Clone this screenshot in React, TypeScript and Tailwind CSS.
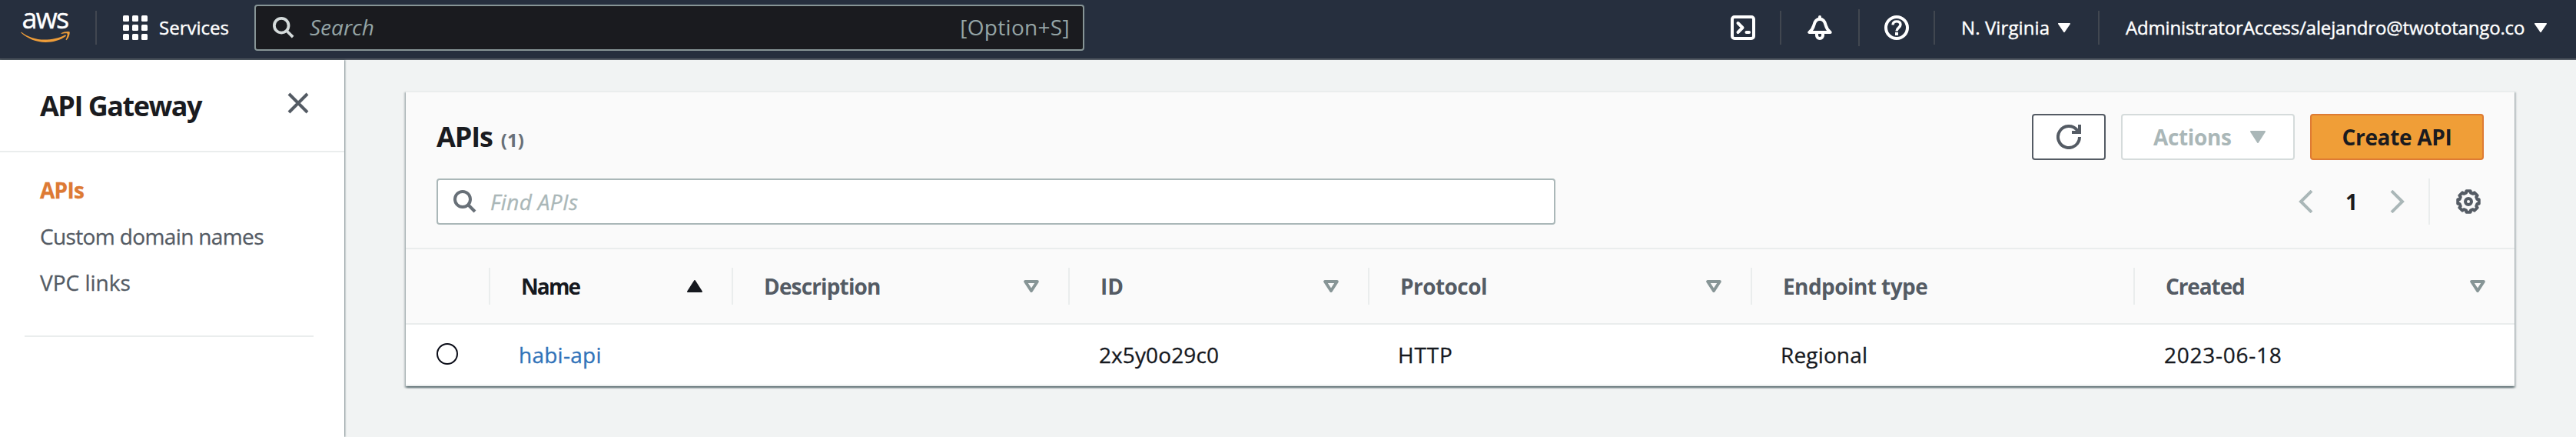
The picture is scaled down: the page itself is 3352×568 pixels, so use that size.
import type { ReactNode } from "react";

function AwsLogo() {
  return (
    <svg className="h-[44px] w-[64px] shrink-0 overflow-visible" viewBox="28 14 64 44">
      <text x="28.5" y="36.5" fontSize="36" letterSpacing="-1.7" fill="#fff" stroke="#fff" strokeWidth="0.4" fontFamily="'Open Sans', sans-serif">aws</text>
      <path d="M28 41.8C36 48 46 51.6 58 51.6 67 51.6 77 49.6 84.5 45.6 85.8 45 86.6 46.4 85.4 47.3 78 52.6 68.500 55 59.500 55 47 55 36 50.200 27.600 42.800 27.100 42.200 27.400 41.500 28 41.800Z" fill="#ee9d39" />
      <path d="M79.500 43.200C82.500 41 90 40.300 90.600 41.500 91.200 42.800 90 49 86.600 52 86 52.400 85.400 52 85.700 51.300 86.800 49 88.300 44.800 87.600 43.700 86.900 42.700 82.600 43.400 80 43.800 79.200 43.900 79 43.500 79.500 43.200Z" fill="#ee9d39" />
    </svg>
  );
}

function GridIcon() {
  return (
    <div className="grid size-8 shrink-0 grid-cols-3 gap-1">
      {Array.from({ length: 9 }, (_, i) => (
        <span key={i} className="size-2 rounded-[1.5px] bg-white" />
      ))}
    </div>
  );
}

function SearchIcon({ className }: { className: string }) {
  return (
    <svg className={className} viewBox="0 0 30 30" fill="none" stroke="currentColor" strokeWidth="4">
      <circle cx="12" cy="12" r="10" />
      <path d="M19 19l9 9" />
    </svg>
  );
}

function ShellIcon() {
  return (
    <svg className="size-8 shrink-0" viewBox="0 0 32 32" fill="none" stroke="#fff" strokeWidth="4">
      <rect x="2" y="2" width="28" height="28" rx="3" />
      <path d="M9.500 10l6 6-6 6" strokeLinecap="round" strokeLinejoin="round" />
      <path d="M20.500 22h3.500" strokeLinecap="round" />
    </svg>
  );
}

function BellIcon() {
  return (
    <svg className="size-8 shrink-0" viewBox="0 0 32 32" fill="none" stroke="#fff" strokeWidth="4" strokeLinejoin="round">
      <path d="M16 2v3" strokeLinecap="round" />
      <path d="M2.300 22h27.400c-3.200-2.600-4.900-5-5.900-9C22.600 7.500 20.200 4.800 16 4.800S9.400 7.500 8.200 13c-1 4-2.700 6.400-5.900 9z" />
      <path d="M12 23v3a4 4 0 0 0 8 0v-3" />
    </svg>
  );
}

function HelpIcon() {
  return (
    <svg className="size-8 shrink-0" viewBox="0 0 32 32" fill="none" stroke="#fff">
      <circle cx="16" cy="16" r="14" strokeWidth="4" />
      <path d="M11 12.300C11.200 9.400 13 7.900 16 7.900c3 0 5 1.600 5 4.200 0 3.900-5 3.600-5 8.400" strokeWidth="3.400" />
      <path d="M16 22v4" strokeWidth="4" />
    </svg>
  );
}

function Caret({ className }: { className: string }) {
  return (
    <svg className={className} viewBox="0 0 20 16" preserveAspectRatio="none" fill="currentColor" stroke="currentColor" strokeWidth="2" strokeLinejoin="round">
      <path d="M1 1h18L10 15z" />
    </svg>
  );
}

function SortIcon() {
  return (
    <svg className="h-4 w-5 shrink-0 text-[#879596]" viewBox="0 0 20 16" fill="none" stroke="currentColor" strokeWidth="4" strokeLinejoin="round">
      <path d="M2.200 2h15.600L10 14z" />
    </svg>
  );
}

function CloseIcon() {
  return (
    <svg className="mb-[6px] size-[28px] shrink-0 text-[#545b64]" viewBox="0 0 28 28" fill="none" stroke="currentColor" strokeWidth="4">
      <path d="M2 2l24 24M26 2L2 26" />
    </svg>
  );
}

function RefreshIcon() {
  return (
    <svg className="size-8" viewBox="0 0 32 32" fill="none" stroke="#545b64" strokeWidth="4">
      <path d="M30 16a14 14 0 1 1-3.200-8.900L30 10" />
      <path d="M20 10h10V0" />
    </svg>
  );
}

const gearPoints = Array.from({ length: 8 }, (_, k) =>
  [[-15, 11.8], [-11, 14], [11, 14], [15, 11.8]]
    .map(([offset, radius]) => {
      const a = ((k * 45 + offset) * Math.PI) / 180;
      return `${(16 + radius * Math.cos(a)).toFixed(2)},${(16 + radius * Math.sin(a)).toFixed(2)}`;
    })
    .join(" "),
).join(" ");

function GearIcon() {
  return (
    <svg className="size-8 shrink-0" viewBox="0 0 32 32" fill="none" stroke="#545b64" strokeWidth="4" strokeLinejoin="round">
      <polygon points={gearPoints} />
      <circle cx="16" cy="16" r="4" />
    </svg>
  );
}

function Chevron({ className }: { className: string }) {
  return (
    <svg className={className} viewBox="0 0 19 30" fill="none" stroke="#aab7b8" strokeWidth="4">
      <path d="M17 1.200L3 15l14 13.800" />
    </svg>
  );
}

function TopBar() {
  return (
    <header className="flex h-[78px] items-center border-b-2 border-[#545b64] bg-[#262f3e] pb-1 pl-7 pr-[38px] text-2xl text-white">
      <AwsLogo />
      <div className="ml-8 h-11 w-0.5 bg-[#414750]" />
      <div className="ml-[34px] flex w-[171px] items-center gap-[15px]">
        <GridIcon />
        <span className="[-webkit-text-stroke:0.4px]">Services</span>
      </div>
      <div className="flex h-[60px] w-[1080px] items-center rounded-[4px] border-2 border-[#879596] bg-[#1a1b1f] pl-[22px] pr-[17px] text-[28px] text-[#95a5a6]">
        <SearchIcon className="size-7 text-[#d5dbdb]" />
        <span className="ml-[20px] flex-1 italic">Search</span>
        <span className="tracking-[0.3px]">[Option+S]</span>
      </div>
      <div className="ml-auto flex items-center [-webkit-text-stroke:0.4px]">
        <ShellIcon />
        <div className="ml-8 mr-[34px] h-11 w-0.5 bg-[#414750]" />
        <BellIcon />
        <div className="ml-[34px] mr-8 h-12 w-0.5 bg-[#414750]" />
        <HelpIcon />
        <div className="ml-8 h-11 w-0.5 bg-[#414750]" />
        <span className="ml-[34px] w-[126px] whitespace-nowrap tracking-[0.1px]">N. Virginia</span>
        <Caret className="h-3 w-4" />
        <div className="ml-9 h-11 w-0.5 bg-[#414750]" />
        <span className="ml-[34px] w-[532px] whitespace-nowrap tracking-[-0.17px]">AdministratorAccess/alejandro@twototango.co</span>
        <Caret className="h-3 w-4" />
      </div>
    </header>
  );
}

function Sidebar() {
  return (
    <aside className="w-[448px] shrink-0 bg-white shadow-[1px_0_2px_0_rgba(0,28,36,0.5)]">
      <div className="flex h-[120px] items-center justify-between border-b-2 border-[#eaeded] pl-[52px] pr-[46px]">
        <h2 className="whitespace-nowrap pt-0.5 text-[36px] font-bold tracking-[-1.5px]">API Gateway</h2>
        <CloseIcon />
      </div>
      <nav className="flex flex-col pl-[52px] pt-[19px] text-[28px] leading-[60px] text-[#545b64] [-webkit-text-stroke:0.3px]">
        <a className="font-bold tracking-[-0.7px] text-[#dd7a34]">APIs</a>
        <a className="tracking-[-0.63px]">Custom domain names</a>
        <a>VPC links</a>
      </nav>
      <div className="ml-8 mt-[39px] h-0.5 w-[376px] bg-[#eaeded]" />
    </aside>
  );
}

function HeaderCell({ children, sort, last }: { children?: ReactNode; sort?: ReactNode; last?: boolean }) {
  return (
    <div className={last ? "flex h-12 items-center justify-between pl-10 pr-[38px]" : "flex h-12 items-center justify-between border-r-2 border-[#eaeded] pl-10 pr-[38px]"}>
      {children}
      {sort}
    </div>
  );
}

const columns = "grid grid-cols-[110px_316px_438px_390px_498px_498px_494px] items-center";

function ApiTable() {
  return (
    <section className="w-[2744px] border-t-2 border-[#eaeded] bg-[#fafafa] shadow-[0_2px_2px_0_rgba(0,28,36,0.4),2px_2px_2px_0_rgba(0,28,36,0.2),-2px_2px_2px_0_rgba(0,28,36,0.2)]">
      <div className="flex h-[88px] items-end justify-between px-10">
        <div className="flex h-[60px] items-center">
          <h1 className="flex items-baseline gap-[11px] text-[36px] font-bold tracking-[-1.1px]">
            APIs
            <span className="text-2xl font-bold tracking-normal text-[#687078]">(1)</span>
          </h1>
        </div>
        <div className="flex gap-5 text-[28px] font-bold">
          <button className="flex h-[60px] w-24 items-center justify-center rounded-[4px] border-2 border-[#545b64] bg-white">
            <RefreshIcon />
          </button>
          <button className="flex h-[60px] w-[226px] items-center justify-between rounded-[4px] border-2 border-[#d5dbdb] bg-white pl-10 pr-9 tracking-[-0.35px] text-[#aab7b8]">
            Actions
            <Caret className="h-4 w-5" />
          </button>
          <button className="h-[60px] w-[226px] rounded-[4px] border-2 border-[#de7b33] bg-[#f09e37] tracking-[-0.3px] text-[#1a1b20]">
            Create API
          </button>
        </div>
      </div>
      <div className="mt-6 flex h-[90px] items-start justify-between pl-10 pr-11">
        <div className="flex h-[60px] w-[1456px] items-center rounded-[4px] border-2 border-[#aab7b8] bg-white pl-5 text-[28px] italic text-[#aab7b8] [-webkit-text-stroke:0.3px]">
          <SearchIcon className="size-[30px] text-[#687078]" />
          <span className="ml-[18px] tracking-[0.35px]">Find APIs</span>
        </div>
        <div className="flex h-[60px] items-center">
          <Chevron className="h-[30px] w-[19px]" />
          <span className="w-[100px] text-center text-[28px] font-bold">1</span>
          <Chevron className="h-[30px] w-[19px] rotate-180" />
          <div className="ml-[31px] mr-[34px] h-[60px] w-0.5 bg-[#eaeded]" />
          <GearIcon />
        </div>
      </div>
      <div className={`${columns} h-[100px] border-y-2 border-[#eaeded] text-[28px] font-bold text-[#545b64]`}>
        <HeaderCell />
        <HeaderCell sort={<Caret className="h-4 w-5 rotate-180 text-[#16191f]" />}>
          <span className="tracking-[-1.9px] text-[#16191f]">Name</span>
        </HeaderCell>
        <HeaderCell sort={<SortIcon />}><span className="tracking-[-0.85px]">Description</span></HeaderCell>
        <HeaderCell sort={<SortIcon />}><span>ID</span></HeaderCell>
        <HeaderCell sort={<SortIcon />}><span className="tracking-[-0.55px]">Protocol</span></HeaderCell>
        <HeaderCell><span className="tracking-[-0.57px]">Endpoint type</span></HeaderCell>
        <HeaderCell last sort={<SortIcon />}><span className="tracking-[-1.1px]">Created</span></HeaderCell>
      </div>
      <div className={`${columns} h-20 border-b-2 border-[#eaeded] bg-white text-[28px] text-[#16191f] [-webkit-text-stroke:0.3px]`}>
        <div className="pb-0.5 pl-10">
          <div className="size-7 rounded-full border-2 border-[#0b0d18]" />
        </div>
        <a className="pl-[37px] tracking-[0.25px] text-[#3173b9]">habi-api</a>
        <div />
        <div className="pl-[38px] tracking-[0.1px]">2x5y0o29c0</div>
        <div className="pl-[37px] tracking-[0.8px]">HTTP</div>
        <div className="pl-[37px] tracking-[0.15px]">Regional</div>
        <div className="pl-[38px] tracking-[0.75px]">2023-06-18</div>
      </div>
    </section>
  );
}

export default function App() {
  return (
    <div className="flex h-[568px] w-[3352px] flex-col overflow-hidden bg-[#f1f3f3] font-['Open_Sans','Noto_Sans',sans-serif] text-[#1a1b20]">
      <TopBar />
      <div className="flex flex-1">
        <Sidebar />
        <main className="pl-20 pt-10">
          <ApiTable />
        </main>
      </div>
    </div>
  );
}
